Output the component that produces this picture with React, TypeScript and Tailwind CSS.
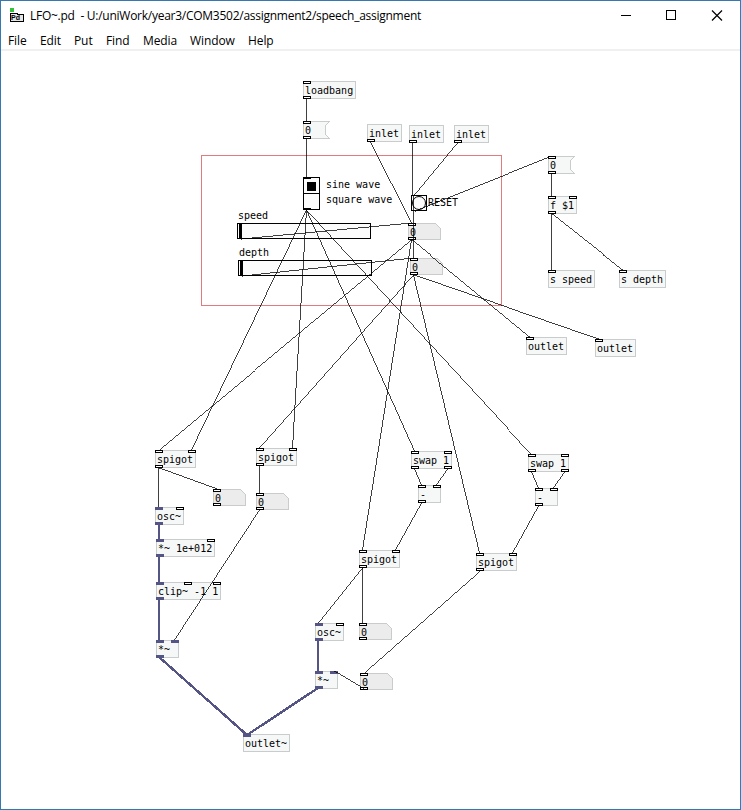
import React from "react";

type Kind = "object" | "message" | "number";

type Port = { dx: number; signal?: boolean };

type PatchNode = {
  kind: Kind;
  text: string;
  x: number;
  y: number;
  w: number;
  ins?: Port[];
  outs?: Port[];
};

const p = (dx: number): Port => ({ dx });
const s = (dx: number): Port => ({ dx, signal: true });

const nodes: PatchNode[] = [
  { kind: "object", text: "loadbang", x: 303, y: 81, w: 53, ins: [p(0)], outs: [p(0)] },
  { kind: "message", text: "0", x: 303, y: 121, w: 27, ins: [p(0)], outs: [p(0)] },
  { kind: "object", text: "inlet", x: 367, y: 124, w: 35, outs: [p(0)] },
  { kind: "object", text: "inlet", x: 409, y: 125, w: 35, outs: [p(0)] },
  { kind: "object", text: "inlet", x: 454, y: 125, w: 35, outs: [p(0)] },
  { kind: "number", text: "0", x: 408, y: 223, w: 33, ins: [p(0)], outs: [p(0)] },
  { kind: "number", text: "0", x: 410, y: 258, w: 33, ins: [p(0)], outs: [p(0)] },
  { kind: "message", text: "0", x: 548, y: 156, w: 27, ins: [p(0)], outs: [p(0)] },
  { kind: "object", text: "f $1", x: 548, y: 196, w: 29, ins: [p(0), p(21)], outs: [p(0)] },
  { kind: "object", text: "s speed", x: 548, y: 270, w: 47, ins: [p(0)] },
  { kind: "object", text: "s depth", x: 619, y: 270, w: 47, ins: [p(0)] },
  { kind: "object", text: "outlet", x: 526, y: 337, w: 41, ins: [p(0)] },
  { kind: "object", text: "outlet", x: 595, y: 339, w: 41, ins: [p(0)] },
  { kind: "object", text: "spigot", x: 155, y: 450, w: 41, ins: [p(0), p(33)], outs: [p(0)] },
  { kind: "object", text: "spigot", x: 256, y: 448, w: 41, ins: [p(0), p(33)], outs: [p(0)] },
  { kind: "number", text: "0", x: 213, y: 489, w: 33, ins: [p(0)], outs: [p(0)] },
  { kind: "number", text: "0", x: 256, y: 493, w: 33, ins: [p(0)], outs: [p(0)] },
  { kind: "object", text: "osc~", x: 155, y: 507, w: 29, ins: [s(0), p(21)], outs: [s(0)] },
  { kind: "object", text: "*~ 1e+012", x: 156, y: 539, w: 59, ins: [s(0), p(51)], outs: [s(0)] },
  { kind: "object", text: "clip~ -1 1", x: 156, y: 582, w: 65, ins: [s(0), p(28), p(57)], outs: [s(0)] },
  { kind: "object", text: "*~", x: 156, y: 640, w: 23, ins: [s(0), s(15)], outs: [s(0)] },
  { kind: "object", text: "swap 1", x: 411, y: 451, w: 41, ins: [p(0), p(33)], outs: [p(0), p(33)] },
  { kind: "object", text: "-", x: 418, y: 485, w: 23, ins: [p(0), p(15)], outs: [p(0)] },
  { kind: "object", text: "spigot", x: 359, y: 550, w: 41, ins: [p(0), p(33)], outs: [p(0)] },
  { kind: "object", text: "swap 1", x: 528, y: 454, w: 41, ins: [p(0), p(33)], outs: [p(0), p(33)] },
  { kind: "object", text: "-", x: 535, y: 488, w: 23, ins: [p(0), p(15)], outs: [p(0)] },
  { kind: "object", text: "spigot", x: 476, y: 553, w: 41, ins: [p(0), p(33)], outs: [p(0)] },
  { kind: "object", text: "osc~", x: 315, y: 623, w: 29, ins: [s(0), p(21)], outs: [s(0)] },
  { kind: "number", text: "0", x: 359, y: 623, w: 33, ins: [p(0)], outs: [p(0)] },
  { kind: "object", text: "*~", x: 315, y: 671, w: 23, ins: [s(0), s(15)], outs: [s(0)] },
  { kind: "number", text: "0", x: 360, y: 673, w: 33, ins: [p(0)], outs: [p(0)] },
  { kind: "object", text: "outlet~", x: 243, y: 734, w: 47, ins: [s(0)] },
];

// Control connections as [x1, y1, x2, y2]
const wires: number[][] = [
  [306, 99, 306, 121],
  [306, 139, 306, 177],
  [370, 142, 411, 223],
  [412, 143, 412, 195],
  [413, 196, 413, 258],
  [457, 143, 414, 195],
  [414, 211, 551, 156],
  [240, 239, 411, 223],
  [241, 276, 413, 258],
  [306, 210, 191, 450],
  [306, 210, 292, 448],
  [306, 210, 414, 451],
  [306, 210, 531, 454],
  [411, 240, 158, 450],
  [411, 240, 362, 550],
  [411, 240, 529, 337],
  [413, 275, 259, 448],
  [413, 275, 479, 553],
  [413, 275, 598, 339],
  [551, 174, 551, 196],
  [551, 214, 551, 270],
  [551, 214, 622, 270],
  [158, 468, 158, 507],
  [158, 468, 216, 489],
  [259, 466, 259, 493],
  [259, 510, 174, 640],
  [414, 469, 421, 485],
  [447, 469, 436, 485],
  [421, 503, 395, 550],
  [531, 472, 538, 488],
  [564, 472, 553, 488],
  [538, 506, 512, 553],
  [362, 568, 318, 623],
  [362, 568, 362, 623],
  [479, 571, 363, 673],
  [363, 689, 333, 671],
];

// Audio-rate connections
const cables: number[][] = [
  [159, 525, 159, 539],
  [159, 557, 159, 582],
  [159, 600, 159, 640],
  [159, 657, 247, 735],
  [318, 641, 318, 671],
  [318, 688, 247, 735],
];

function outline(kind: Kind, w: number, h: number) {
  const r = w - 0.5;
  const b = h - 0.5;
  if (kind === "message")
    return `0.5,0.5 ${r},0.5 ${r - 4},4.5 ${r - 4},${b - 4} ${r},${b} 0.5,${b}`;
  if (kind === "number") return `0.5,0.5 ${r - 5},0.5 ${r},5.5 ${r},${b} 0.5,${b}`;
  return `0.5,0.5 ${r},0.5 ${r},${b} 0.5,${b}`;
}

function Ports({ ports, y }: { ports?: Port[]; y: number }) {
  return (
    <>
      {(ports ?? []).map((q, i) => (
        <rect
          key={i}
          x={q.dx + 0.5}
          y={y + 0.5}
          width={7}
          height={2}
          fill={q.signal ? "#555585" : "#ffffff"}
          stroke={q.signal ? "#555585" : "#000000"}
        />
      ))}
    </>
  );
}

function Box({ n }: { n: PatchNode }) {
  const h = n.kind === "number" ? 17 : 18;
  return (
    <div className="absolute" style={{ left: n.x, top: n.y, width: n.w, height: h }}>
      <svg className="absolute inset-0 overflow-visible" width={n.w} height={h} shapeRendering="crispEdges">
        <polygon
          points={outline(n.kind, n.w, h)}
          fill={n.kind === "number" ? "#ececec" : "#f6f8f8"}
          stroke="#c8cccc"
        />
        <Ports ports={n.ins} y={0} />
        <Ports ports={n.outs} y={h - 3} />
      </svg>
      <span className="relative block pl-[2px] leading-[20px] whitespace-pre">{n.text}</span>
    </div>
  );
}

function Radio() {
  return (
    <div className="absolute top-[177px] left-[303px] flex gap-[6px]">
      <div className="flex h-[33px] w-[17px] flex-col border border-black bg-[#fcfcfc]">
        <div className="h-px w-[7px] bg-black" />
        <div className="flex h-[15px] items-center justify-center border-b border-black">
          <div className="h-[9px] w-[9px] bg-black" />
        </div>
        <div className="mt-auto h-px w-[7px] bg-black" />
      </div>
      <div className="flex flex-col leading-[15px] whitespace-pre">
        <span>sine wave</span>
        <span>square wave</span>
      </div>
    </div>
  );
}

function Slider({ x, y, label }: { x: number; y: number; label: string }) {
  return (
    <div className="absolute flex flex-col" style={{ left: x, top: y }}>
      <span className="h-[13px] pl-px leading-[12px]">{label}</span>
      <div className="h-[16px] w-[134px] border border-black bg-[#fcfcfc] pl-[1px]">
        <div className="h-full w-[3px] bg-black" />
      </div>
    </div>
  );
}

function Bang() {
  return (
    <div className="absolute top-[195px] left-[411px] flex items-center gap-px">
      <div className="h-[16px] w-[16px] border border-black bg-[#fcfcfc]">
        <div className="h-[14px] w-[14px] rounded-full border border-black" />
      </div>
      <span className="leading-[16px]">RESET</span>
    </div>
  );
}

function TitleBar() {
  return (
    <header className="flex h-[30px] items-center pl-[8px]">
      <svg width="16" height="16" className="shrink-0" shapeRendering="crispEdges">
        <rect x="1" y="0" width="4" height="4" fill="#35c13c" />
        <path d="M1.5 5.5H8.5V6.5H14.5V13.5H1.5Z" fill="#e6e6e6" stroke="#000" />
        <rect x="1" y="13" width="14" height="1" fill="#000" />
        <text x="2" y="12" fontFamily="Liberation Sans" fontSize="7" fontWeight="700">
          Pd
        </text>
      </svg>
      <span className="ml-[5px] text-[12px] tracking-[-0.26px] whitespace-pre">
        LFO~.pd  - U:/uniWork/year3/COM3502/assignment2/speech_assignment
      </span>
      <svg className="mr-[17px] ml-auto" width="102" height="12" fill="none" stroke="#000">
        <path d="M0 5.5H10" />
        <rect x="45.5" y="0.5" width="9" height="9" />
        <path d="M91 0.5L101 10.5M101 0.5L91 10.5" strokeWidth="1.2" />
      </svg>
    </header>
  );
}

const menus = [
  ["File", "w-[32px]"],
  ["Edit", "w-[34px]"],
  ["Put", "w-[32px]"],
  ["Find", "w-[37px]"],
  ["Media", "w-[47px]"],
  ["Window", "w-[58px]"],
  ["Help", "w-[40px]"],
];

export default function App() {
  return (
    <div className="relative flex h-[810px] w-[741px] flex-col overflow-hidden border border-[#3878b0] border-r-[#1883d7] border-b-[#2a7dae] bg-white font-['Open_Sans','Noto_Sans',sans-serif] text-black">
      <TitleBar />
      <nav className="flex h-[20px] items-center border-b-2 border-[#f0f0f0] pt-px pl-[7px] text-[12px] tracking-[-0.1px]">
        {menus.map(([name, width]) => (
          <span key={name} className={width}>
            {name}
          </span>
        ))}
      </nav>

      <main className="absolute -top-px -left-px h-[810px] w-[741px] font-['DejaVu_Sans_Mono',monospace] text-[10px]">
        <div className="absolute top-[155px] left-[201px] h-[151px] w-[301px] border border-[#e07c80]" />
        <Radio />
        <Slider x={237} y={210} label="speed" />
        <Slider x={238} y={247} label="depth" />
        <Bang />

        {nodes.map((n, i) => (
          <Box key={i} n={n} />
        ))}

        <svg className="absolute inset-0" width="741" height="810" shapeRendering="crispEdges">
          {wires.map(([x1, y1, x2, y2], i) => (
            <line key={i} x1={x1 + 0.5} y1={y1} x2={x2 + 0.5} y2={y2} stroke="#000" strokeWidth={0.75} />
          ))}
          {cables.map(([x1, y1, x2, y2], i) => (
            <line
              key={i}
              x1={x1}
              y1={y1}
              x2={x2}
              y2={y2}
              stroke="#555585"
              strokeWidth={x1 === x2 ? 2 : 2.4}
            />
          ))}
        </svg>
      </main>
    </div>
  );
}
